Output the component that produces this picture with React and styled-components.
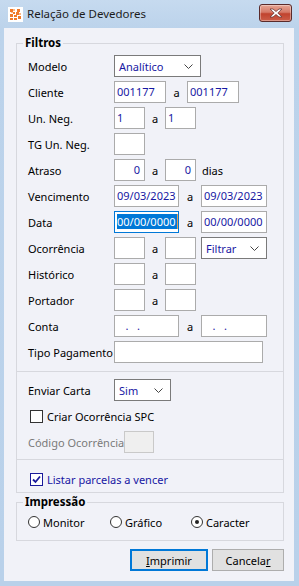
import React from "react";
import styled, { createGlobalStyle } from "styled-components";

const Global = createGlobalStyle`
  html, body {
    margin: 0;
    padding: 0;
    background: #b9d1ea;
  }
  body {
    font-family: "Noto Sans", "DejaVu Sans", sans-serif;
    font-size: 11px;
  }
`;

const Frame = styled.div`
  width: 299px;
  height: 586px;
  display: flex;
  flex-direction: column;
  background: linear-gradient(#c6daef 0, #bcd3eb 28px, #b9d1ea 100%);
  box-sizing: border-box;
`;

const TitleBar = styled.div`
  height: 28px;
  flex: none;
  display: flex;
  align-items: center;
  padding-left: 8px;
  color: #1c1c1c;
  font-size: 11.5px;
`;

const TitleText = styled.span`
  margin-left: 4px;
  flex: 1;
  line-height: 16px;
`;

const CloseButton = styled.div`
  width: 31px;
  height: 16px;
  margin-right: 7px;
  margin-top: -2px;
  border: 1px solid #5a2a2a;
  border-radius: 3px;
  background: linear-gradient(#e6a594 0%, #d67a68 45%, #c0432e 55%, #cc5e49 100%);
  display: flex;
  align-items: center;
  justify-content: center;
  box-shadow: inset 0 0 0 1px rgba(255, 255, 255, 0.35);
`;

const Client = styled.div`
  flex: 1;
  margin: 0 5px 5px 4px;
  background: #f1f2f8;
  display: flex;
  flex-direction: column;
`;

const Group = styled.fieldset`
  margin: ${(p) => p.$top}px 10px 0 12px;
  padding: ${(p) => p.$pt}px 10px ${(p) => p.$pb}px 11px;
  border: 1px solid #d7d8de;
  min-inline-size: 0;
`;

const Legend = styled.legend`
  font-weight: bold;
  font-size: 11.5px;
  line-height: 16px;
  padding: 0 2px;
  margin-left: -5px;
  color: #000;
`;

const Rows = styled.div`
  display: flex;
  flex-direction: column;
  gap: 4px;
  padding-top: ${(p) => p.$pt || 0}px;
`;

const Row = styled.div`
  display: flex;
  align-items: center;
  height: 22px;
`;

const Label = styled.span`
  width: ${(p) => p.$w || 86}px;
  flex: none;
  color: ${(p) => (p.$disabled ? "#7a7a7a" : "#000")};
  white-space: nowrap;
`;

const Field = styled.div`
  width: ${(p) => p.$w}px;
  height: 22px;
  box-sizing: border-box;
  flex: none;
  border: 1px solid ${(p) => (p.$focus ? "#0078d7" : p.$disabled ? "#c9c9c9" : "#ababab")};
  background: ${(p) => (p.$disabled ? "#efefef" : "#fff")};
  color: #1717a3;
  padding: 0 ${(p) => (p.$right ? 4 : 2)}px 0 2px;
  line-height: 20px;
  text-align: ${(p) => (p.$right ? "right" : "left")};
  white-space: pre;
  overflow: hidden;
`;

const Selected = styled.span`
  background: #0078d7;
  color: #fff;
  padding-right: 1px;
  border-right: 1px solid #e8a050;
`;

const Select = styled.div`
  width: ${(p) => p.$w}px;
  height: 22px;
  box-sizing: border-box;
  flex: none;
  border: 1px solid #7a7a7a;
  background: #fff;
  color: #1717a3;
  display: flex;
  align-items: center;
  justify-content: space-between;
  padding: 0 7px 0 4px;
`;

const Sep = styled.span`
  width: ${(p) => p.$w}px;
  flex: none;
  text-align: center;
  color: #000;
`;

const Suffix = styled.span`
  margin-left: 6px;
  color: #000;
`;

const Divider = styled.div`
  height: 1px;
  background: #d7d8de;
  margin: ${(p) => p.$mt}px -10px ${(p) => p.$mb}px -11px;
`;

const Check = styled.div`
  display: flex;
  align-items: center;
  height: 22px;
  padding-left: 2px;
  gap: 4px;
  color: ${(p) => (p.$checked ? "#1717a3" : "#000")};
`;

const Box = styled.span`
  width: 13px;
  height: 13px;
  box-sizing: border-box;
  border: 1px solid ${(p) => (p.$checked ? "#1a1a9a" : "#333")};
  background: #fff;
  display: flex;
  align-items: center;
  justify-content: center;
`;

const Radios = styled.div`
  display: grid;
  grid-template-columns: 82px 81px auto;
  height: 22px;
  align-items: center;
`;

const Radio = styled.div`
  display: flex;
  align-items: center;
  gap: 3px;
  color: #000;
`;

const Dot = styled.span`
  width: 12px;
  height: 12px;
  box-sizing: border-box;
  border: 1px solid #333;
  border-radius: 50%;
  background: #fff;
  display: flex;
  align-items: center;
  justify-content: center;
  &::after {
    content: "";
    width: 4px;
    height: 4px;
    border-radius: 50%;
    background: ${(p) => (p.$on ? "#222" : "transparent")};
  }
`;

const Buttons = styled.div`
  display: flex;
  justify-content: flex-end;
  gap: 4px;
  margin: 8px 10px 0 0;
`;

const Button = styled.div`
  width: ${(p) => p.$w}px;
  height: 22px;
  box-sizing: border-box;
  border: ${(p) => (p.$default ? "2px solid #0078d7" : "1px solid #adadad")};
  background: #e1e1e1;
  display: flex;
  align-items: center;
  justify-content: center;
  color: #000;
  u {
    text-decoration: underline;
  }
`;

const Chevron = () => (
  <svg width="9" height="5" viewBox="0 0 9 5">
    <path d="M0.5 0.5 L4.5 4.5 L8.5 0.5" fill="none" stroke="#444" strokeWidth="1" />
  </svg>
);

const AppIcon = () => (
  <svg width="15" height="15" viewBox="0 0 15 15">
    <rect x="0" y="0" width="15" height="15" fill="#fff" />
    <g fill="#f07a2a">
      <rect x="2" y="2" width="3" height="3" />
      <rect x="9" y="2" width="3" height="3" />
      <rect x="5" y="5" width="2" height="2" />
      <rect x="8" y="5" width="3" height="3" />
      <rect x="2" y="7" width="3" height="3" />
      <rect x="6" y="8" width="3" height="2" />
      <rect x="10" y="9" width="3" height="3" />
      <rect x="2" y="11" width="3" height="2" />
      <rect x="6" y="11" width="3" height="2" />
    </g>
    <g fill="#f9b98a">
      <rect x="5" y="2" width="2" height="2" />
      <rect x="11" y="6" width="2" height="2" />
      <rect x="3" y="5" width="2" height="1" />
    </g>
  </svg>
);

const CloseX = () => (
  <svg width="14" height="10" viewBox="0 0 14 10">
    <path
      d="M1 1 L4 1 L7 3.5 L10 1 L13 1 L8.8 5 L13 9 L10 9 L7 6.5 L4 9 L1 9 L5.2 5 Z"
      fill="#fff"
      stroke="#6a3a3a"
      strokeWidth="0.8"
    />
  </svg>
);

const CheckMark = () => (
  <svg width="9" height="9" viewBox="0 0 9 9">
    <path d="M1 4.5 L3.5 7 L8 1.5" fill="none" stroke="#1a1a9a" strokeWidth="1.8" />
  </svg>
);

export default function App() {
  return (
    <>
      <Global />
      <Frame>
        <TitleBar>
          <AppIcon />
          <TitleText>Relação de Devedores</TitleText>
          <CloseButton>
            <CloseX />
          </CloseButton>
        </TitleBar>
        <Client>
          <Group $top={7} $pt={0} $pb={2}>
            <Legend>Filtros</Legend>
            <Rows $pt={4}>
              <Row>
                <Label>Modelo</Label>
                <Select $w={87}>
                  <span>Analítico</span>
                  <Chevron />
                </Select>
              </Row>
              <Row>
                <Label>Cliente</Label>
                <Field $w={52}>001177</Field>
                <Sep $w={21}>a</Sep>
                <Field $w={52}>001177</Field>
              </Row>
              <Row>
                <Label>Un. Neg.</Label>
                <Field $w={31}>1</Field>
                <Sep $w={20}>a</Sep>
                <Field $w={31}>1</Field>
              </Row>
              <Row>
                <Label>TG Un. Neg.</Label>
                <Field $w={31} />
              </Row>
              <Row>
                <Label>Atraso</Label>
                <Field $w={31} $right>0</Field>
                <Sep $w={20}>a</Sep>
                <Field $w={31} $right>0</Field>
                <Suffix>dias</Suffix>
              </Row>
              <Row>
                <Label>Vencimento</Label>
                <Field $w={65}>09/03/2023</Field>
                <Sep $w={22}>a</Sep>
                <Field $w={66}>09/03/2023</Field>
              </Row>
              <Row>
                <Label>Data</Label>
                <Field $w={65} $focus>
                  <Selected>00/00/0000</Selected>
                </Field>
                <Sep $w={22}>a</Sep>
                <Field $w={66}>00/00/0000</Field>
              </Row>
              <Row>
                <Label>Ocorrência</Label>
                <Field $w={31} />
                <Sep $w={20}>a</Sep>
                <Field $w={31} />
                <Sep $w={5} />
                <Select $w={66}>
                  <span>Filtrar</span>
                  <Chevron />
                </Select>
              </Row>
              <Row>
                <Label>Histórico</Label>
                <Field $w={31} />
                <Sep $w={20}>a</Sep>
                <Field $w={31} />
              </Row>
              <Row>
                <Label>Portador</Label>
                <Field $w={31} />
                <Sep $w={20}>a</Sep>
                <Field $w={31} />
              </Row>
              <Row>
                <Label>Conta</Label>
                <Field $w={65}>{"   .   ."}</Field>
                <Sep $w={22}>a</Sep>
                <Field $w={66}>{"   .   ."}</Field>
              </Row>
              <Row>
                <Label>Tipo Pagamento</Label>
                <Field $w={149} />
              </Row>
            </Rows>
            <Divider $mt={8} $mb={7} />
            <Rows>
              <Row>
                <Label>Enviar Carta</Label>
                <Select $w={57}>
                  <span>Sim</span>
                  <Chevron />
                </Select>
              </Row>
              <Check>
                <Box />
                <span>Criar Ocorrência SPC</span>
              </Check>
              <Row>
                <Label $w={96} $disabled>
                  Código Ocorrência
                </Label>
                <Field $w={30} $disabled />
              </Row>
            </Rows>
            <Divider $mt={6} $mb={8} />
            <Check $checked>
              <Box $checked>
                <CheckMark />
              </Box>
              <span>Listar parcelas a vencer</span>
            </Check>
          </Group>
          <Group $top={1} $pt={1} $pb={7}>
            <Legend>Impressão</Legend>
            <Radios>
              <Radio>
                <Dot />
                <span>Monitor</span>
              </Radio>
              <Radio>
                <Dot />
                <span>Gráfico</span>
              </Radio>
              <Radio>
                <Dot $on />
                <span>Caracter</span>
              </Radio>
            </Radios>
          </Group>
          <Buttons>
            <Button $w={78} $default>
              <span>
                <u>I</u>mprimir
              </span>
            </Button>
            <Button $w={72}>
              <span>
                Cancela<u>r</u>
              </span>
            </Button>
          </Buttons>
        </Client>
      </Frame>
    </>
  );
}
